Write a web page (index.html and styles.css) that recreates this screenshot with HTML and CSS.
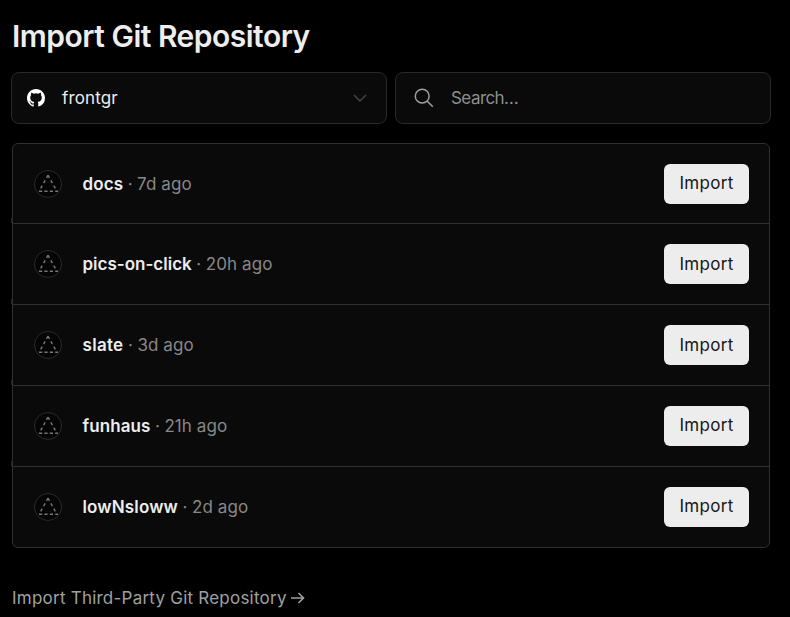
FILE: index.html
```
<!DOCTYPE html>
<html lang="en">
<head>
<meta charset="utf-8">
<title>Import Git Repository</title>
<link rel="stylesheet" href="styles.css">
</head>
<body>
<svg class="defs" width="0" height="0" aria-hidden="true">
  <symbol id="placeholder" viewBox="0 0 28 28">
    <circle cx="14" cy="14" r="13.5" fill="#050505" stroke="#2b2b2b"/>
    <g fill="none" stroke="#777" stroke-width="1.4">
      <path d="M14 5.2 5.2 21" stroke-dasharray="3 3"/>
      <path d="M14 5.2 22.8 21" stroke-dasharray="3 3"/>
      <path d="M5 21.3h19" stroke-dasharray="3.2 2.2"/>
    </g>
  </symbol>
</svg>
<main class="import">
  <h1 class="title">Import Git Repository</h1>
  <div class="controls">
    <div class="field account">
      <svg class="github" viewBox="0 0 16 16" fill="#fff"><path d="M8 0C3.58 0 0 3.58 0 8c0 3.54 2.29 6.53 5.47 7.59.4.07.55-.17.55-.38 0-.19-.01-.82-.01-1.49-2.01.37-2.53-.49-2.69-.94-.09-.23-.48-.94-.82-1.13-.28-.15-.68-.52-.01-.53.63-.01 1.08.58 1.23.82.72 1.21 1.87.87 2.33.66.07-.52.28-.87.51-1.07-1.78-.2-3.64-.89-3.64-3.95 0-.87.31-1.59.82-2.15-.08-.2-.36-1.02.08-2.12 0 0 .67-.21 2.2.82a7.6 7.6 0 0 1 4 0c1.53-1.04 2.2-.82 2.2-.82.44 1.1.16 1.92.08 2.12.51.56.82 1.27.82 2.15 0 3.07-1.87 3.75-3.65 3.95.29.25.54.73.54 1.48 0 1.07-.01 1.93-.01 2.2 0 .21.15.46.55.38A8.01 8.01 0 0 0 16 8c0-4.42-3.58-8-8-8z"/></svg>
      <span class="account-name">frontgr</span>
      <svg class="chevron" viewBox="0 0 14 8"><path d="M1 1l6 6 6-6" fill="none" stroke="#484848" stroke-width="1.4"/></svg>
    </div>
    <div class="field search">
      <svg class="magnifier" viewBox="0 0 20 20" fill="none" stroke="#a0a0a0" stroke-width="1.5"><circle cx="8.2" cy="8.2" r="6.9"/><path d="M13 13l5.8 5.8"/></svg>
      <span class="search-text">Search…</span>
    </div>
  </div>
  <ul class="repos">
    <li class="repo"><svg class="avatar"><use href="#placeholder"/></svg><span class="name docs">docs</span><span class="dot">·</span><span class="age">7d ago</span><button class="button">Import</button></li>
    <li class="repo"><svg class="avatar"><use href="#placeholder"/></svg><span class="name pics">pics-on-click</span><span class="dot">·</span><span class="age">20h ago</span><button class="button">Import</button></li>
    <li class="repo"><svg class="avatar"><use href="#placeholder"/></svg><span class="name slate">slate</span><span class="dot">·</span><span class="age">3d ago</span><button class="button">Import</button></li>
    <li class="repo"><svg class="avatar"><use href="#placeholder"/></svg><span class="name funhaus">funhaus</span><span class="dot">·</span><span class="age">21h ago</span><button class="button raised">Import</button></li>
    <li class="repo"><svg class="avatar"><use href="#placeholder"/></svg><span class="name low">lowNsloww</span><span class="dot">·</span><span class="age">2d ago</span><button class="button raised">Import</button></li>
  </ul>
  <a class="third-party"><span>Import Third-Party Git Repository</span><svg class="arrow" viewBox="0 0 14 12"><path d="M0 6h12.5M7.5 1l5 5-5 5" fill="none" stroke="#a0a0a0" stroke-width="1.6"/></svg></a>
</main>
</body>
</html>
```
FILE: styles.css
```
* { box-sizing: border-box; }
body {
  margin: 0;
  background: #000;
  color: #ededed;
  font: 17px/24px Inter, "Liberation Sans", sans-serif;
}
.defs { position: absolute; }
.import { padding: 16px 19px 0 11px; }
.title {
  margin: 0 0 16px 1px;
  font-size: 30px;
  line-height: 40px;
  font-weight: 600;
  letter-spacing: -0.5px;
  white-space: nowrap;
}
.controls { display: grid; grid-template-columns: 1fr 1fr; gap: 8px; }
.field {
  height: 52px;
  display: flex;
  align-items: center;
  background: #0a0a0a;
  border: 1px solid #292929;
  border-radius: 8px;
}
.account { padding: 0 19px 0 15px; }
.github { width: 18px; height: 18px; }
.account-name { margin-left: 17px; letter-spacing: 0.15px; }
.chevron { width: 14px; height: 8px; margin-left: auto; }
.search { padding-left: 18px; color: #8f8f8f; }
.magnifier { width: 20px; height: 20px; }
.search-text { margin-left: 17px; letter-spacing: -0.55px; }
.repos {
  list-style: none;
  margin: 19px 1px 0;
  padding: 0;
  background: #0a0a0a;
  border: 1px solid #303030;
  border-radius: 6px;
}
.repo {
  position: relative;
  height: 81px;
  display: flex;
  align-items: center;
  padding: 0 20px 0 21px;
  border-bottom: 1px solid #303030;
}
.repo:first-child { height: 80px; }
.repo:last-child { height: 80px; border-bottom: 0; }
.repo:not(:last-child)::before {
  content: "";
  position: absolute;
  left: -2px;
  bottom: 0;
  width: 1px;
  height: 5px;
  background: #242424;
}
.avatar { width: 28px; height: 28px; margin-right: 20.5px; }
.name { font-weight: 600; }
.docs { letter-spacing: 0.1px; }
.slate { letter-spacing: 0.3px; }
.funhaus { letter-spacing: 0.08px; }
.low { letter-spacing: 0.15px; }
.dot { width: 14px; text-align: center; color: #888; }
.age { color: #888; letter-spacing: 0.08px; }
.button {
  width: 85px;
  height: 40px;
  margin-left: auto;
  padding: 0 0 1px;
  border: 0;
  border-radius: 6px;
  background: #ededed;
  color: #171717;
  font: inherit;
  letter-spacing: 0.3px;
}
.raised { padding-bottom: 2px; }
.third-party {
  display: flex;
  align-items: center;
  margin: 38px 0 0 1px;
  color: #a0a0a0;
  letter-spacing: 0.23px;
  white-space: nowrap;
}
.arrow { width: 14px; height: 12px; margin-left: 4px; }
```
